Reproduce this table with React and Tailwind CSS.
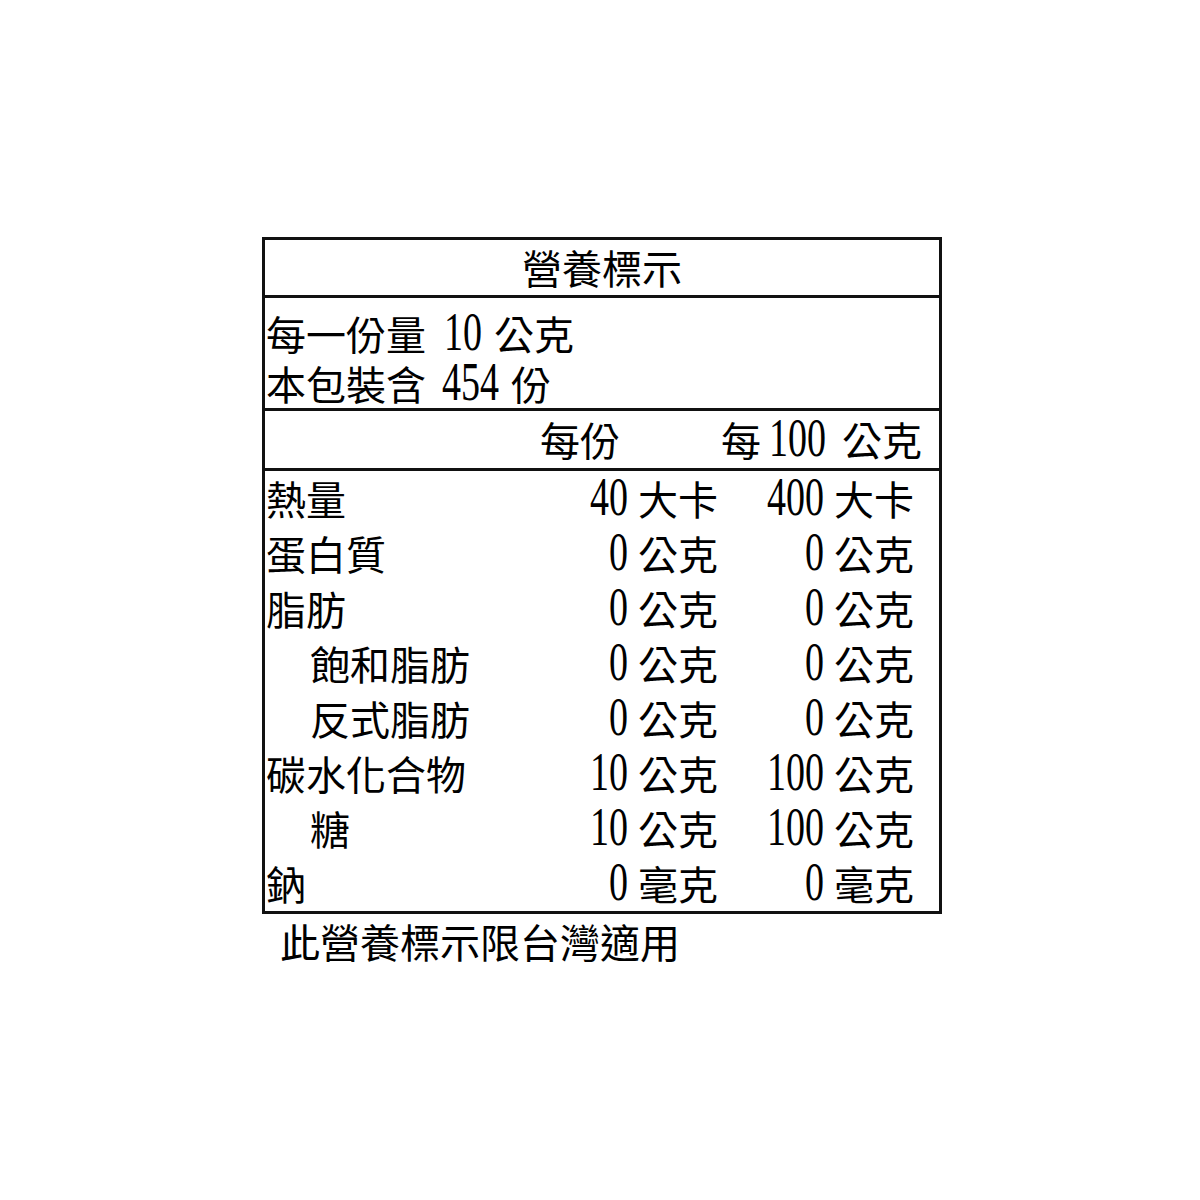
const cjk = { fontFamily: '"Noto Sans CJK TC", "Noto Sans", sans-serif' };

// narrow, tall serif digits like the printed label
const Num = ({ children, className = "" }) => (
    <span
        className={`inline-block leading-none text-[38px] origin-[50%_84%] scale-y-[1.45] ${className}`}
        style={{ fontFamily: '"Liberation Serif", "Times New Roman", serif' }}
    >
        {children}
    </span>
);

const rows = [
    { label: "熱量", a: "40", b: "400", unit: "大卡" },
    { label: "蛋白質", a: "0", b: "0", unit: "公克" },
    { label: "脂肪", a: "0", b: "0", unit: "公克" },
    { label: "飽和脂肪", a: "0", b: "0", unit: "公克", indent: true },
    { label: "反式脂肪", a: "0", b: "0", unit: "公克", indent: true },
    { label: "碳水化合物", a: "10", b: "100", unit: "公克" },
    { label: "糖", a: "10", b: "100", unit: "公克", indent: true },
    { label: "鈉", a: "0", b: "0", unit: "毫克" },
];

const Value = ({ n, unit, className }) => (
    <div className={className}>
        <Num>{n}</Num>
        <span className="ml-[10px]">{unit}</span>
    </div>
);

export default function App() {
    return (
        <div className="w-[1200px] h-[1200px] bg-white text-black pt-[237px]" style={cjk}>
            <div className="ml-[262px] w-[680px]">
                <div className="border-[3px] border-[#111] flex flex-col text-[40px]">
                    <div className="h-[55px] leading-[55px] text-center">營養標示</div>
                    <div className="h-[3px] bg-[#111]" />
                    <div className="h-[110px] pt-[10px] leading-[50px] pl-[1px]">
                        <div className="flex items-baseline">
                            <span>每一份量</span>
                            <Num className="ml-[18px]">10</Num>
                            <span className="ml-[12px]">公克</span>
                        </div>
                        <div className="flex items-baseline">
                            <span>本包裝含</span>
                            <Num className="ml-[16px]">454</Num>
                            <span className="ml-[12px]">份</span>
                        </div>
                    </div>
                    <div className="h-[3px] bg-[#111]" />
                    <div className="h-[57px] leading-[57px] flex items-baseline">
                        <span className="ml-[275px]">每份</span>
                        <span className="ml-auto pr-[17px] flex items-baseline">
                            <span>每</span>
                            <Num className="ml-[8px]">100</Num>
                            <span className="ml-[16px]">公克</span>
                        </span>
                    </div>
                    <div className="h-[3px] bg-[#111]" />
                    <div className="flex flex-col">
                        {rows.map(({ label, a, b, unit, indent }) => (
                            <div key={label} className="h-[55px] leading-[55px] flex pr-[25px]">
                                <div className={indent ? "flex-1 pl-[45px]" : "flex-1 pl-[1px]"}>{label}</div>
                                <Value n={a} unit={unit} className="w-[200px] text-right" />
                                <Value n={b} unit={unit} className="w-[196px] text-right" />
                            </div>
                        ))}
                    </div>
                </div>
                <div className="pl-[18px] text-[40px] leading-[55px]">此營養標示限台灣適用</div>
            </div>
        </div>
    );
}
